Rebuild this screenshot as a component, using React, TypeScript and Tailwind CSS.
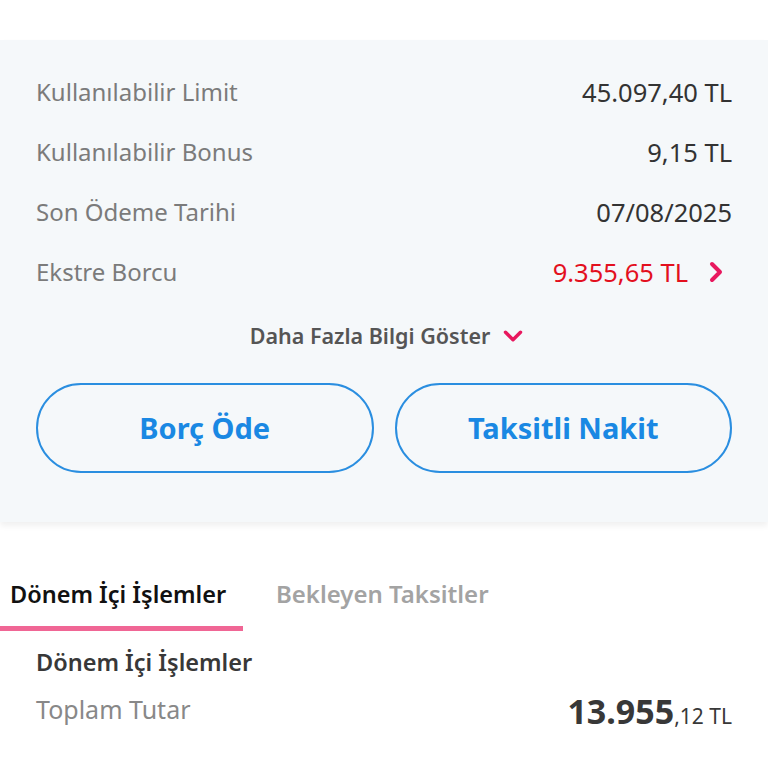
import { ChevronDown, ChevronRight } from "lucide-react";

const rows = [
  { label: "Kullanılabilir Limit", value: "45.097,40 TL" },
  { label: "Kullanılabilir Bonus", value: "9,15 TL" },
  { label: "Son Ödeme Tarihi", value: "07/08/2025" },
];

export default function App() {
  return (
    <div className="min-h-[768px] bg-white" style={{ fontFamily: "'Noto Sans', Lato, sans-serif" }}>
      <div className="h-[40px]" />
      <div className="bg-[#f5f8fa] px-[36px] pt-[22px] pb-[49px] shadow-[0_4px_6px_rgba(0,0,0,0.06)]">
        {rows.map((r) => (
          <div key={r.label} className="flex h-[60px] items-center justify-between">
            <span className="text-[24px] text-[#7b7b7b]">{r.label}</span>
            <span className="text-[25.5px] text-[#333]">{r.value}</span>
          </div>
        ))}
        <div className="flex h-[60px] items-center justify-between">
          <span className="text-[24px] text-[#7b7b7b]">Ekstre Borcu</span>
          <span className="flex items-center gap-[12px] text-[25.5px] text-[#e3101e]">
            9.355,65 TL
            <ChevronRight className="h-[32px] w-[32px] text-[#e8185e]" strokeWidth={3} />
          </span>
        </div>
        <div className="mt-[20px] flex h-[28px] items-center justify-center gap-[8px] pl-[10px]">
          <span className="text-[21.5px] font-semibold leading-[28px] text-[#555]">Daha Fazla Bilgi Göster</span>
          <ChevronDown className="h-[30px] w-[30px] text-[#e8185e]" strokeWidth={2.75} />
        </div>
        <div className="mt-[33px] grid grid-cols-2 gap-[21px]">
          <button className="h-[90px] rounded-full border-2 border-[#2a8ee0] text-[29px] font-bold text-[#1a88e3]">
            Borç Öde
          </button>
          <button className="h-[90px] rounded-full border-2 border-[#2a8ee0] text-[29px] font-bold text-[#1a88e3]">
            Taksitli Nakit
          </button>
        </div>
      </div>
      <div className="mt-[56px] flex items-start">
        <div className="w-[243px]">
          <div className="pl-[10px] pb-[16px] text-[23.5px] font-semibold leading-[32px] text-[#111]">Dönem İçi İşlemler</div>
          <div className="h-[5px] bg-[#f06695]" />
        </div>
        <div className="ml-[33px] text-[24px] font-semibold leading-[32px] text-[#a3a3a3]">Bekleyen Taksitler</div>
      </div>
      <div className="px-[36px] pt-[16px]">
        <div className="text-[23.5px] font-semibold leading-[30px] text-[#383838]">Dönem İçi İşlemler</div>
        <div className="mt-[17px] flex items-start justify-between">
          <span className="text-[25px] leading-[30px] text-[#888]">Toplam Tutar</span>
          <span className="-mt-[3px] leading-[40px] text-[#383838]">
            <span className="text-[34px] font-bold">13.955</span>
            <span className="text-[21px]">,12 TL</span>
          </span>
        </div>
      </div>
    </div>
  );
}
